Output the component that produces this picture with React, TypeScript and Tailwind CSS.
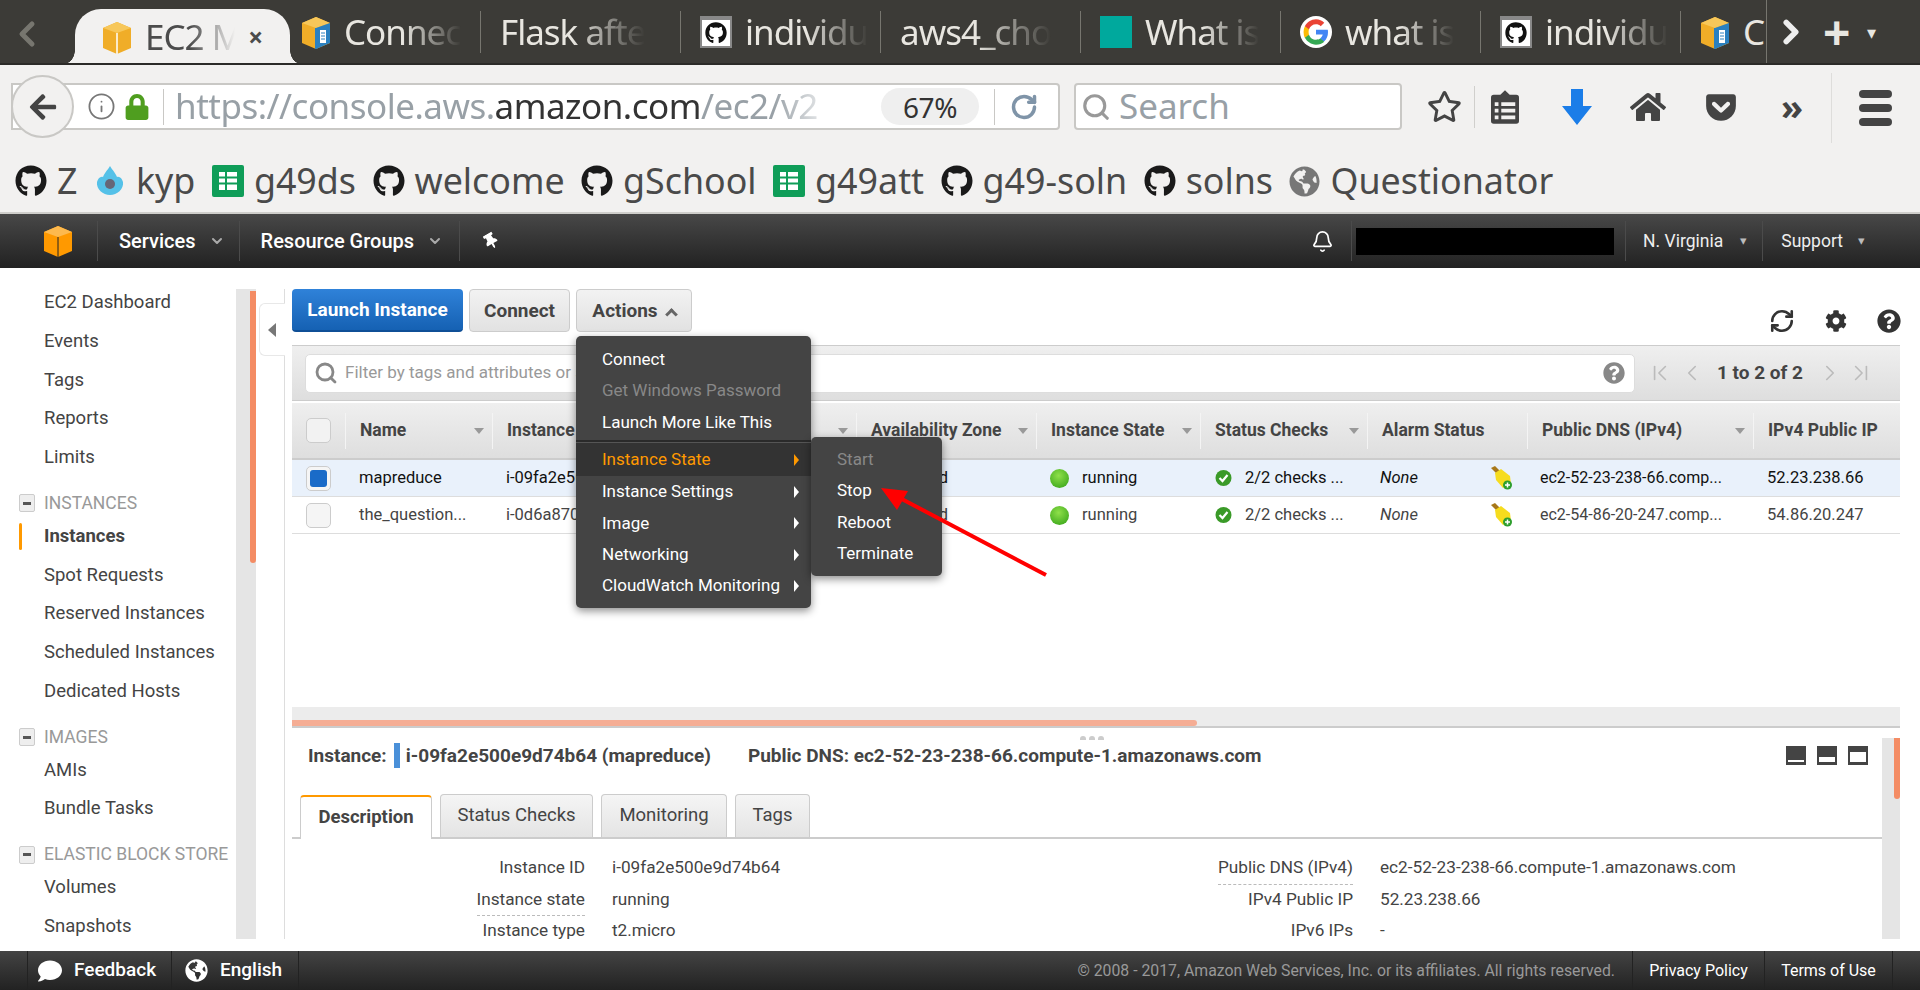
import { Bell, ChevronDown, ChevronFirst, ChevronLast, ChevronLeft, ChevronRight, Info, RefreshCw, RotateCw, Search } from "lucide-react";
import {
  FaArrowLeft,
  FaCog,
  FaComment,
  FaGetPocket,
  FaGithub,
  FaGlobeAmericas,
  FaHome,
  FaLock,
  FaQuestionCircle,
  FaRegStar,
  FaThumbtack,
} from "react-icons/fa";

const FADE = "[mask-image:linear-gradient(to_right,black_50%,transparent_100%)]";

function Box({ size = 30, note = false }: { size?: number; note?: boolean }) {
  return (
    <svg width={size} height={size * 1.1} viewBox="0 0 30 33" className="shrink-0">
      <path d="M15 1 29 7v20l-14 6L1 27V7z" fill="#f0ad28" />
      <path d="M15 1 29 7l-14 5L1 7z" fill="#f7c75a" />
      <path d="M15 12v21" stroke={note ? "#2a80c0" : "#fff"} strokeWidth={note ? 2 : 1.5} />
      {note && <path d="M15 12l14-5v20l-14 6z" fill="#2a80c0" />}
      {note && <path d="M19 14h6v13h-6z" fill="#fff" />}
      {note && <path d="M20 17h4M20 20h4M20 23h4" stroke="#2a80c0" />}
    </svg>
  );
}

function GithubTab() {
  return (
    <div className="w-[32px] h-[32px] bg-white border-2 border-t-4 border-[#888] flex items-center justify-center shrink-0">
      <FaGithub size={22} color="#111" />
    </div>
  );
}

function Google() {
  return (
    <svg width="32" height="32" viewBox="0 0 48 48" className="shrink-0">
      <circle cx="24" cy="24" r="24" fill="#fff" />
      <path d="M42 24.5c0-1.3-.1-2.5-.3-3.7H24v7h10.100c-.4 2.300-1.800 4.300-3.700 5.600v4.600h6C40 34.800 42 30.100 42 24.500z" fill="#4285f4" />
      <path d="M24 43c5 0 9.200-1.700 12.400-4.500l-6-4.600c-1.700 1.100-3.800 1.800-6.400 1.800-4.900 0-9-3.300-10.500-7.700H7.300v4.800C10.400 38.400 16.700 43 24 43z" fill="#34a853" />
      <path d="M13.500 28c-.8-2.300-.8-5.700 0-8v-4.800H7.300c-2.600 5-2.600 12.600 0 17.600z" fill="#fbbc05" />
      <path d="M24 12.500c2.700 0 5.200.9 7.100 2.800l5.300-5.300C33.200 7 29 5 24 5 16.700 5 10.400 9.600 7.300 15.200l6.200 4.800c1.500-4.400 5.600-7.500 10.500-7.500z" fill="#ea4335" />
    </svg>
  );
}

function Sheet() {
  return (
    <svg width="32" height="32" viewBox="0 0 32 32" className="shrink-0">
      <rect width="32" height="32" rx="2" fill="#0f9d58" />
      <path d="M7 7h18v18H7z" fill="#fff" />
      <path d="M7 12.500h18M7 18.500h18M14 7v18" stroke="#0f9d58" strokeWidth="2" />
    </svg>
  );
}

function TabSep() {
  return <div className="w-px h-[42px] bg-[#77766f] shrink-0" />;
}

function Tab({ icon, label, wide = 199 }: { icon?: React.ReactNode; label: string; wide?: number }) {
  return (
    <>
      <div className="flex items-center gap-[13px] overflow-hidden shrink-0 pl-[19px] pr-[15px] h-[64px]" style={{ width: wide }}>
        {icon}
        <span className={`whitespace-nowrap ${FADE}`}>{label}</span>
      </div>
      <TabSep />
    </>
  );
}

function TabBar() {
  return (
    <div className="h-[65px] bg-[#3c3b37] border-b-2 border-[#2c2b28] flex items-start text-[#e8e6e0] text-[35px] font-['Noto_Sans',sans-serif] tracking-[-1px] overflow-hidden">
      <ChevronLeft size={40} strokeWidth={3} color="#77766f" className="ml-[6px] mt-[14px] w-[42px] shrink-0" />
      <div className="relative mt-[9px] h-[56px] w-[215px] ml-[27px] shrink-0 bg-[#f2f1f0] rounded-t-[26px] flex items-center pl-[27px] pr-[28px] gap-[13px] text-[#4c4c4c]">
        <div className="absolute -left-[14px] bottom-0 w-[14px] h-[14px] bg-[radial-gradient(circle_at_0_0,transparent_13.500px,#f2f1f0_14px)]" />
        <div className="absolute -right-[14px] bottom-0 w-[14px] h-[14px] bg-[radial-gradient(circle_at_100%_0,transparent_13.500px,#f2f1f0_14px)]" />
        <Box />
        <span className={`flex-1 overflow-hidden whitespace-nowrap ${FADE}`}>EC2 M</span>
        <span className="text-[26px] font-bold">×</span>
      </div>
      <div className="flex items-center shrink-0 h-[64px] mt-0 -ml-[8px]">
        <Tab icon={<Box note />} label="Connec" wide={198} />
        <Tab label="Flask afte" />
        <Tab icon={<GithubTab />} label="individu" />
        <Tab label="aws4_cho" />
        <Tab icon={<div className="w-[32px] h-[32px] bg-[#00a99d] shrink-0" />} label="What is" />
        <Tab icon={<Google />} label="what is" />
        <Tab icon={<GithubTab />} label="individu" />
        <div className="flex items-center gap-[13px] pl-[19px] w-[85px] h-[64px] shrink-0 overflow-hidden">
          <Box note />
          <span>C</span>
        </div>
      </div>
      <div className="flex items-center h-[64px] border-l border-[#77766f] shrink-0">
        <ChevronRight size={38} strokeWidth={3.500} color="#eee" className="ml-[5px]" />
        <span className="ml-[13px] text-[48px] leading-none font-bold">+</span>
        <span className="ml-[18px] text-[18px] leading-none">▾</span>
      </div>
    </div>
  );
}

function ToolBar() {
  return (
    <div className="h-[80px] bg-[#f2f1f0] flex items-start pt-[18px] font-['Noto_Sans',sans-serif]">
      <div className="relative ml-[11px] w-[1049px] h-[47px] shrink-0 flex items-center bg-white border-2 border-[#c9c8c5] rounded-r-[4px] text-[35px] tracking-[-0.5px]">
        <div className="absolute -left-[2px] -top-[10px] w-[63px] h-[63px] rounded-full bg-[#f2f1f0] border-2 border-[#c9c8c5] flex items-center justify-center">
          <FaArrowLeft size={30} color="#444" />
        </div>
        <Info size={29} strokeWidth={1.500} color="#777" className="ml-[74px] shrink-0" />
        <FaLock size={26} color="#4f9e1f" className="ml-[8px] shrink-0" />
        <div className="w-px h-[36px] bg-[#c9c8c5] ml-[13px] mr-[11px] shrink-0" />
        <span className="w-[664px] overflow-hidden whitespace-nowrap text-[#98a0a6] [mask-image:linear-gradient(to_right,black_90%,transparent_100%)]">
          https://console.aws.<span className="text-[#333]">amazon.com</span>/ec2/v2
        </span>
        <span className="w-[98px] h-[37px] rounded-full bg-[#efefef] text-[28px] text-[#333] flex items-center justify-center shrink-0 ml-[42px]">67%</span>
        <div className="w-px h-[36px] bg-[#c9c8c5] ml-[15px] shrink-0" />
        <RotateCw size={28} strokeWidth={3} color="#7f94a8" className="ml-[15px] shrink-0" />
      </div>
      <div className="ml-[14px] w-[328px] h-[47px] shrink-0 bg-white border-2 border-[#c9c8c5] rounded-[4px] flex items-center text-[35px] text-[#98a0a6]">
        <Search size={30} strokeWidth={2.500} color="#999" className="ml-[5px] mr-[8px]" />
        Search
      </div>
      <div className="flex items-center h-[47px] ml-[25px] text-[#444]">
        <FaRegStar size={35} />
        <div className="w-px h-[42px] bg-[#d0cfcc] ml-[12px] mr-[16px]" />
        <svg width="28" height="34" viewBox="0 0 30 36">
          <path d="M10 5l5-5 5 5h7a3 3 0 0 1 3 3v25a3 3 0 0 1-3 3H3a3 3 0 0 1-3-3V8a3 3 0 0 1 3-3z" fill="#444" />
          <path d="M4 13h4v4H4zM4 20h4v4H4zM4 27h4v4H4zM11 13h15v4H11zM11 20h15v4H11zM11 27h15v4H11z" fill="#f2f1f0" />
        </svg>
        <svg width="30" height="36" viewBox="0 0 30 36" className="ml-[43px]">
          <path d="M9 0h12v17h9L15 36 0 17h9z" fill="#1b7de8" />
        </svg>
        <FaHome size={36} className="ml-[38px]" />
        <FaGetPocket size={34} className="ml-[38px]" />
        <span className="ml-[43px] text-[36px] leading-none font-bold">»</span>
      </div>
      <div className="w-px h-[70px] bg-[#dedddb] ml-[28px] -mt-[10px]" />
      <div className="ml-[27px] mt-[7px] flex flex-col gap-[6px]">
        <div className="w-[33px] h-[8px] rounded-full bg-[#444]" />
        <div className="w-[33px] h-[8px] rounded-full bg-[#444]" />
        <div className="w-[33px] h-[8px] rounded-full bg-[#444]" />
      </div>
    </div>
  );
}

function Mark({ icon, label }: { icon: React.ReactNode; label: string }) {
  return (
    <div className="flex items-center gap-[10px]">
      {icon}
      <span>{label}</span>
    </div>
  );
}

const gh = <FaGithub size={32} color="#1a1a1a" />;

function Bookmarks() {
  return (
    <div className="h-[69px] bg-[#f2f1f0] border-b-2 border-[#cfcecb] flex items-center gap-[16.500px] pl-[15px] pt-[5px] text-[#4a4a4a] text-[35.800px] font-['Noto_Sans',sans-serif]">
      <Mark icon={gh} label="Z" />
      <Mark
        icon={
          <svg width="32" height="32" viewBox="0 0 32 32">
            <path d="M16 1c3 5 5 6 7 11 3-1 5 2 6 5 1 7-6 13-13 13S2 24 3 17c1-3 3-6 6-5 2-5 4-6 7-11z" fill="#55c1e8" />
            <circle cx="16" cy="19" r="5" fill="#667" />
          </svg>
        }
        label="kyp"
      />
      <Mark icon={<Sheet />} label="g49ds" />
      <Mark icon={gh} label="welcome" />
      <Mark icon={gh} label="gSchool" />
      <Mark icon={<Sheet />} label="g49att" />
      <Mark icon={gh} label="g49-soln" />
      <Mark icon={gh} label="solns" />
      <Mark icon={<FaGlobeAmericas size={31} color="#777" />} label="Questionator" />
    </div>
  );
}

function NavSep() {
  return <div className="w-px h-[40px] bg-[#4b4b4b] shrink-0" />;
}

function Caret({ className = "" }: { className?: string }) {
  return <span className={`text-[13px] text-[#bbb] ${className}`}>▾</span>;
}

function AwsNav() {
  return (
    <div className="h-[54px] bg-gradient-to-b from-[#484848] to-[#222222] flex items-center text-white font-['Roboto',sans-serif] shrink-0">
      <svg width="28" height="31" viewBox="0 0 28 31" className="ml-[44px] mr-[25px] shrink-0">
        <path d="M14 0 28 6v19l-14 6L0 25V6z" fill="#f90" />
        <path d="M14 0 28 6l-14 5L0 6z" fill="#fdb94e" />
        <path d="M14 11v20" stroke="#222" strokeWidth="1" />
      </svg>
      <NavSep />
      <span className="ml-[21px] text-[20px] font-medium whitespace-nowrap">Services</span>
      <ChevronDown size={16} strokeWidth={3} color="#aaa" className="ml-[13px] mr-[14px] shrink-0" />
      <NavSep />
      <span className="ml-[21px] text-[20px] font-medium whitespace-nowrap">Resource Groups</span>
      <ChevronDown size={16} strokeWidth={3} color="#aaa" className="ml-[13px] mr-[16px] shrink-0" />
      <NavSep />
      <FaThumbtack size={16} className="ml-[23px] -rotate-30" />
      <div className="flex-1" />
      <Bell size={23} strokeWidth={1.800} />
      <div className="ml-[17px] mr-[4px]"><NavSep /></div>
      <div className="w-[258px] h-[27px] bg-black" />
      <div className="ml-[11px]"><NavSep /></div>
      <span className="ml-[17px] text-[17.500px] text-[#eee] whitespace-nowrap">N. Virginia</span>
      <Caret className="ml-[17px] mr-[15px]" />
      <NavSep />
      <span className="ml-[18px] text-[17.500px] text-[#eee] whitespace-nowrap">Support</span>
      <Caret className="ml-[15px] mr-[55px]" />
    </div>
  );
}

function NavItem({ label, active = false }: { label: string; active?: boolean }) {
  return (
    <div className={`relative h-[38.75px] flex items-center pl-[44px] whitespace-nowrap ${active ? "font-bold" : ""}`}>
      {active && <div className="absolute left-[19px] top-[6px] bottom-[6px] w-[3px] rounded-sm bg-[#f90]" />}
      {label}
    </div>
  );
}

function NavHead({ label }: { label: string }) {
  return (
    <div className="mt-[12px] h-[28px] flex items-center text-[#999] text-[17.500px] whitespace-nowrap">
      <div className="ml-[19px] w-[16px] h-[18px] mr-[9px] rounded-[2px] border border-[#ccc] bg-[#eee] flex items-center justify-center shrink-0">
        <div className="w-[8px] h-[3px] bg-[#555]" />
      </div>
      {label}
    </div>
  );
}

function Sidebar() {
  return (
    <>
      <nav className="w-[236px] shrink-0 pt-[15.500px] text-[18.500px] text-[#444] overflow-hidden h-[671px]">
        <NavItem label="EC2 Dashboard" />
        <NavItem label="Events" />
        <NavItem label="Tags" />
        <NavItem label="Reports" />
        <NavItem label="Limits" />
        <NavHead label="INSTANCES" />
        <NavItem label="Instances" active />
        <NavItem label="Spot Requests" />
        <NavItem label="Reserved Instances" />
        <NavItem label="Scheduled Instances" />
        <NavItem label="Dedicated Hosts" />
        <NavHead label="IMAGES" />
        <NavItem label="AMIs" />
        <NavItem label="Bundle Tasks" />
        <NavHead label="ELASTIC BLOCK STORE" />
        <NavItem label="Volumes" />
        <NavItem label="Snapshots" />
      </nav>
      <div className="w-[20px] h-[650px] mt-[21px] bg-[#e5e5e5] shrink-0 flex justify-end">
        <div className="w-[6px] h-[272px] mt-[2px] bg-[#f48c64] rounded-b-sm" />
      </div>
      <div className="w-[29px] h-[650px] mt-[21px] shrink-0 border-r border-[#ddd]">
        <div className="mt-[14px] ml-[3px] h-[53px] w-[26px] bg-white border border-r-0 border-[#e8e8e8] rounded-l-md flex items-center pl-[8px]">
          <div className="w-0 h-0 border-y-[7px] border-y-transparent border-r-[8px] border-r-[#777]" />
        </div>
      </div>
    </>
  );
}

function ActionBtn({ label, width }: { label: string; width: string }) {
  return (
    <div className={`${width} h-[43px] pt-[2px] rounded-[4px] border border-[#ccc] bg-gradient-to-b from-[#f2f2f2] to-[#e2e2e2] flex items-center justify-center font-bold text-[#444] gap-[8px]`}>
      {label}
    </div>
  );
}

function MenuItem({ label, arrow = false, active = false, off = false }: { label: string; arrow?: boolean; active?: boolean; off?: boolean }) {
  const color = active ? "text-[#f90]" : off ? "text-[#888]" : "text-white";
  return (
    <div className={`flex items-center pl-[26px] pr-[12px] justify-between whitespace-nowrap ${color} ${active ? "bg-[#333] h-[33px]" : "h-[31.400px]"}`}>
      {label}
      {arrow && <span className={`w-0 h-0 border-y-[6px] border-y-transparent border-l-[5px] ${active ? "border-l-[#f90]" : "border-l-white"}`} />}
    </div>
  );
}

function ActionsMenu() {
  return (
    <div className="absolute left-0 top-[47px] w-[235px] h-[272px] pt-[8px] rounded-[5px] bg-[#444] shadow-[0_3px_8px_rgba(0,0,0,0.45)] text-[17px] font-normal z-10">
      <MenuItem label="Connect" />
      <MenuItem label="Get Windows Password" off />
      <MenuItem label="Launch More Like This" />
      <div className="h-[3px] mt-[2px] bg-[#2a2a2a] border-b border-[#555]" />
      <MenuItem label="Instance State" arrow active />
      <MenuItem label="Instance Settings" arrow />
      <MenuItem label="Image" arrow />
      <MenuItem label="Networking" arrow />
      <MenuItem label="CloudWatch Monitoring" arrow />
      <div className="absolute left-[235px] top-[101px] w-[131px] h-[139px] pt-[7px] rounded-[5px] bg-[#444] shadow-[0_3px_8px_rgba(0,0,0,0.45)]">
        <MenuItem label="Start" off />
        <MenuItem label="Stop" />
        <MenuItem label="Reboot" />
        <MenuItem label="Terminate" />
      </div>
    </div>
  );
}

const COLS = "grid grid-cols-[53px_147px_182px_182px_180px_164px_167px_160px_226px_1fr]";

function HeadCell({ label, sort = true }: { label: string; sort?: boolean }) {
  return (
    <div className="flex items-center border-l border-[#f4f4f4] h-[36px] pl-[14px] pr-[8px] justify-between whitespace-nowrap overflow-hidden">
      {label}
      {sort && <span className="w-0 h-0 border-x-[5px] border-x-transparent border-t-[6px] border-t-[#999]" />}
    </div>
  );
}

function Broom() {
  return (
    <svg width="22" height="24" viewBox="0 0 22 24">
      <path d="M0 2 4 0l5 5-3 3z" fill="#a8781a" />
      <path d="M4 7 10 3l9 7 1 8-8 4-7-8z" fill="#f6dc1e" />
      <circle cx="16.500" cy="19" r="4.500" fill="#2e9e2e" />
      <path d="M14 19h5M16.500 16.500v5" stroke="#fff" strokeWidth="1.500" />
    </svg>
  );
}

function Check() {
  return (
    <svg width="17" height="18" viewBox="0 0 17 18" className="shrink-0">
      <circle cx="8.500" cy="9" r="8" fill="#3a9a28" />
      <path d="M4.500 9l3 3 5-6" stroke="#fff" strokeWidth="2.200" fill="none" />
    </svg>
  );
}

function Row({
  selected = false,
  name,
  id,
  dns,
  ip,
}: {
  selected?: boolean;
  name: string;
  id: string;
  dns: string;
  ip: string;
}) {
  return (
    <div className={`${COLS} h-[37px] items-center border-b border-[#ddd] text-[16.500px] ${selected ? "bg-[#e9f1fb] text-[#111]" : "text-[#444]"}`}>
      <div className="pl-[14px]">
        <div className="w-[25px] h-[25px] rounded-[5px] border border-[#ccc] bg-[#f5f5f5] flex items-center justify-center">
          {selected && <div className="w-[17px] h-[17px] rounded-[3px] bg-[#1a6bc8]" />}
        </div>
      </div>
      <div className="pl-[14px] whitespace-nowrap">{name}</div>
      <div className="pl-[14px] whitespace-nowrap">{id}</div>
      <div className="pl-[14px]">t2.micro</div>
      <div className="pl-[15px]">us-east-1d</div>
      <div className="pl-[14px] flex items-center gap-[13px]">
        <div className="w-[19px] h-[19px] rounded-full bg-[radial-gradient(circle_at_45%_35%,#8fe04a,#2e9e14)]" />
        running
      </div>
      <div className="pl-[15px] flex items-center gap-[13px] whitespace-nowrap">
        <Check />
        2/2 checks ...
      </div>
      <div className="pl-[13px] pr-[14px] flex items-center justify-between italic">
        None
        <Broom />
      </div>
      <div className="pl-[13px] whitespace-nowrap text-[16px]">{dns}</div>
      <div className="pl-[14px]">{ip}</div>
    </div>
  );
}

function InstancesPane() {
  return (
    <div className="h-[439px] shrink-0 flex flex-col">
      <div className="flex items-end h-[43px] gap-[6px] shrink-0 text-[19px]">
        <div className="w-[171px] h-[43px] pt-[2px] rounded-[4px] bg-gradient-to-b from-[#2f82d9] to-[#1561b3] border-b-2 border-[#0f4f96] flex items-center justify-center text-white font-bold">
          Launch Instance
        </div>
        <ActionBtn label="Connect" width="w-[101px]" />
        <div className="relative">
          <div className="w-[116px] h-[43px] pt-[2px] rounded-[4px] border border-[#ccc] bg-gradient-to-b from-[#f2f2f2] to-[#e2e2e2] flex items-center justify-center font-bold text-[#444] gap-[9px]">
            Actions
            <span className="w-[9px] h-[9px] border-l-[3px] border-t-[3px] border-[#666] rotate-45 mt-[5px]" />
          </div>
          <ActionsMenu />
        </div>
        <div className="flex-1" />
        <div className="flex items-center text-[#333] gap-[30px] -mb-[2px] -mr-[1px]">
          <RefreshCw size={26} strokeWidth={2.400} />
          <FaCog size={22} />
          <FaQuestionCircle size={24} />
        </div>
      </div>
      <div className="mt-[13px] h-[56px] shrink-0 border-y border-[#ccc] bg-gradient-to-b from-[#efefef] to-[#dedede] flex items-center pl-[13px]">
        <div className="w-[1330px] h-[39px] bg-white rounded-[5px] border border-[#ddd] flex items-center pl-[8px] text-[17px] text-[#999] shrink-0">
          <Search size={24} strokeWidth={2.800} color="#888" className="mr-[7px]" />
          <span className="flex-1 whitespace-nowrap overflow-hidden">Filter by tags and attributes or search by keyword</span>
          <FaQuestionCircle size={22} color="#888" className="mr-[9px]" />
        </div>
        <div className="flex items-center text-[#bbb] ml-[12px]">
          <ChevronFirst size={26} strokeWidth={1.500} />
          <ChevronLeft size={26} strokeWidth={1.500} className="ml-[6px]" />
          <span className="ml-[12px] mr-[14px] text-[19px] font-bold text-[#444] whitespace-nowrap">1 to 2 of 2</span>
          <ChevronRight size={26} strokeWidth={1.500} />
          <ChevronLast size={26} strokeWidth={1.500} className="ml-[5px]" />
        </div>
      </div>
      <div className={`${COLS} h-[57px] mt-[2px] items-center shrink-0 bg-gradient-to-b from-[#efefef] to-[#dedede] border-b-2 border-[#ccc] text-[#444] font-bold text-[17.500px]`}>
        <div className="pl-[14px]">
          <div className="w-[25px] h-[25px] rounded-[5px] border border-[#ccc] bg-[#f2f2f2]" />
        </div>
        <HeadCell label="Name" />
        <HeadCell label="Instance ID" />
        <HeadCell label="Instance Type" />
        <HeadCell label="Availability Zone" />
        <HeadCell label="Instance State" />
        <HeadCell label="Status Checks" />
        <HeadCell label="Alarm Status" sort={false} />
        <HeadCell label="Public DNS (IPv4)" />
        <HeadCell label="IPv4 Public IP" sort={false} />
      </div>
      <Row selected name="mapreduce" id="i-09fa2e500e9d74b64" dns="ec2-52-23-238-66.comp..." ip="52.23.238.66" />
      <Row name="the_question..." id="i-0d6a870" dns="ec2-54-86-20-247.comp..." ip="54.86.20.247" />
      <div className="flex-1" />
      <div className="h-[21px] shrink-0 bg-[#ececec] border-b-2 border-[#ccc] flex items-end">
        <div className="w-[905px] h-[6px] bg-[#f5ad94] rounded-r-sm" />
      </div>
    </div>
  );
}

function Field({ label, value, dashed = false }: { label: string; value: string; dashed?: boolean }) {
  return (
    <div className="flex items-start h-[31.500px] text-[17.200px] text-[#444]">
      <div className="w-[293px] flex justify-end shrink-0">
        <span className={`whitespace-nowrap ${dashed ? "border-b border-dashed border-[#bbb] pb-[3px]" : ""}`}>{label}</span>
      </div>
      <span className="ml-[27px] whitespace-nowrap">{value}</span>
    </div>
  );
}

function PaneIcon({ fill }: { fill: number }) {
  return (
    <svg width="20" height="19" viewBox="0 0 20 19">
      <rect width="20" height="19" fill="#444" />
      <rect x="2" y={16 - fill} width="16" height={fill} fill="#fff" />
    </svg>
  );
}

function TabBtn({ label, width, active = false }: { label: string; width: string; active?: boolean }) {
  return active ? (
    <div className={`${width} h-[44px] -mb-[2px] relative z-10 bg-white border-x border-[#ccc] border-t-2 border-t-[#f90] rounded-t-[4px] flex items-center justify-center font-bold text-[#444]`}>
      {label}
    </div>
  ) : (
    <div className={`${width} h-[43px] bg-gradient-to-b from-[#f5f5f5] to-[#e4e4e4] border border-b-0 border-[#ccc] rounded-t-[4px] flex items-center justify-center text-[#444]`}>
      {label}
    </div>
  );
}

function DetailsPane() {
  return (
    <div className="flex-1 relative flex min-h-0">
      <div className="absolute left-[788px] top-[8px] flex gap-[3px]">
        <div className="w-[6px] h-[4px] rounded-t-full bg-[#ccc]" />
        <div className="w-[6px] h-[4px] rounded-t-full bg-[#ccc]" />
        <div className="w-[6px] h-[4px] rounded-t-full bg-[#ccc]" />
      </div>
      <div className="flex-1 min-w-0">
        <div className="h-[67px] pl-[16px] pr-[14px] pt-[15px] flex items-start font-bold text-[19px] text-[#444] whitespace-nowrap">
          <span className="leading-[25px]">Instance:</span>
          <div className="w-[6px] h-[25px] bg-[#4a90d9] ml-[7px] mr-[6px]" />
          <span className="leading-[25px]">i-09fa2e500e9d74b64 (mapreduce)</span>
          <span className="ml-[37px] leading-[25px]">Public DNS: ec2-52-23-238-66.compute-1.amazonaws.com</span>
          <div className="flex-1" />
          <div className="flex gap-[11px] pt-[3px]">
            <PaneIcon fill={2} />
            <PaneIcon fill={5} />
            <PaneIcon fill={10} />
          </div>
        </div>
        <div className="h-[44px] flex items-end pl-[8px] gap-[8px] border-b-2 border-[#ccc] text-[18.500px]">
          <TabBtn label="Description" width="w-[132px]" active />
          <TabBtn label="Status Checks" width="w-[153px]" />
          <TabBtn label="Monitoring" width="w-[126px]" />
          <TabBtn label="Tags" width="w-[75px]" />
        </div>
        <div className="flex pt-[16px]">
          <div className="w-[768px]">
            <Field label="Instance ID" value="i-09fa2e500e9d74b64" />
            <Field label="Instance state" value="running" dashed />
            <Field label="Instance type" value="t2.micro" />
          </div>
          <div>
            <Field label="Public DNS (IPv4)" value="ec2-52-23-238-66.compute-1.amazonaws.com" dashed />
            <Field label="IPv4 Public IP" value="52.23.238.66" />
            <Field label="IPv6 IPs" value="-" />
          </div>
        </div>
      </div>
      <div className="w-[18px] shrink-0 bg-[#e5e5e5] flex justify-end mt-[10px]">
        <div className="w-[6px] h-[61px] bg-[#f48c64] rounded-b-sm" />
      </div>
    </div>
  );
}

function Footer() {
  return (
    <div className="h-[39px] mt-auto shrink-0 bg-gradient-to-b from-[#444444] to-[#222222] flex items-center text-white text-[19px] font-['Roboto',sans-serif]">
      <div className="ml-[27px] h-full border-x border-[#222] w-[145px] flex items-center pl-[10px] gap-[12px] font-medium">
        <FaComment size={24} />
        Feedback
      </div>
      <div className="h-full border-r border-[#222] w-[127px] flex items-center pl-[13px] gap-[12px] font-medium">
        <FaGlobeAmericas size={23} />
        English
      </div>
      <div className="flex-1" />
      <span className="text-[#999] text-[15.800px] whitespace-nowrap">© 2008 - 2017, Amazon Web Services, Inc. or its affiliates. All rights reserved.</span>
      <div className="ml-[17px] h-full border-x border-[#222] w-[133px] flex items-center justify-center text-[16px]">Privacy Policy</div>
      <div className="h-full border-r border-[#222] w-[128px] flex items-center justify-center text-[16px]">Terms of Use</div>
      <div className="w-[27px]" />
    </div>
  );
}

export default function App() {
  return (
    <div className="relative w-[1920px] h-[990px] flex flex-col overflow-hidden bg-white font-['Roboto',sans-serif]">
      <TabBar />
      <ToolBar />
      <Bookmarks />
      <AwsNav />
      <div className="flex h-[671px] shrink-0">
        <Sidebar />
        <div className="flex-1 min-w-0 flex flex-col pt-[21px] pl-[7px] pr-[20px]">
          <InstancesPane />
          <DetailsPane />
        </div>
      </div>
      <Footer />
      {/* red annotation arrow */}
      <svg className="absolute left-[870px] top-[480px] z-20" width="190" height="105" viewBox="0 0 190 105">
        <path d="M176 95 28 17" stroke="#f00" strokeWidth="4" />
        <path d="M11 8 38 11 27 30z" fill="#f00" />
      </svg>
    </div>
  );
}
